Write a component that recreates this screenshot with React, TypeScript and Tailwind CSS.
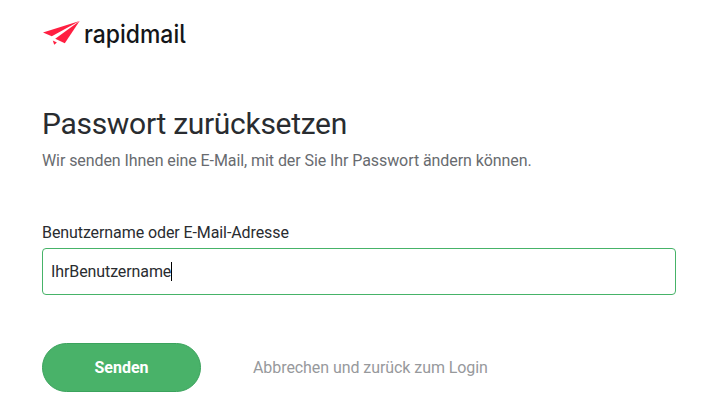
export default function App() {
  return (
    <main className="h-[416px] w-[707px] overflow-hidden bg-white pl-[42px] pt-[20px] font-['Roboto',sans-serif] text-[#292c30]">
      <header className="flex h-[30px] items-start">
        <svg width="38" height="28" viewBox="0 0 38 28" fill="#ff1f41">
          <path d="M1 12.6 37.6 1 9.8 16.3Z" />
          <path d="M37.6 1 22.8 23.2 13.2 18.8Z" />
          <path d="M10.8 20.5 14.9 22.4 12.2 24.8Z" />
        </svg>
        <span className="ml-[4px] mt-[1px] origin-left scale-x-[0.918] font-['Inter',sans-serif] text-[25px] font-medium leading-[27px] text-[#131518] [font-feature-settings:'cv05']">rapidmail</span>
      </header>
      <h1 className="mt-[56px] text-[30px] leading-[36px] tracking-[-0.3px]">Passwort zurücksetzen</h1>
      <p className="mt-[7px] text-[16px] leading-[24px] tracking-[-0.078px] text-[#686b6f]">Wir senden Ihnen eine E-Mail, mit der Sie Ihr Passwort ändern können.</p>
      <form className="mt-[48px]">
        <label className="block text-[16px] leading-[24px] tracking-[-0.09px]">Benutzername oder E-Mail-Adresse</label>
        <div className="mt-[3px] flex h-[47px] w-[634px] items-center rounded-[4px] border border-[#46b368] px-[8px] text-[16px] tracking-[-0.1px]">
          <span>IhrBenutzername</span>
          <span className="h-[19px] w-px bg-black" />
        </div>
        <div className="mt-[48px] flex items-center">
          <button type="button" className="h-[49px] w-[159px] rounded-full border border-[#3ba35d] bg-[#49b269] text-[16px] font-bold text-white">Senden</button>
          <a className="ml-[52px] text-[16px] tracking-[-0.07px] text-[#97999c]">Abbrechen und zurück zum Login</a>
        </div>
      </form>
    </main>
  );
}
